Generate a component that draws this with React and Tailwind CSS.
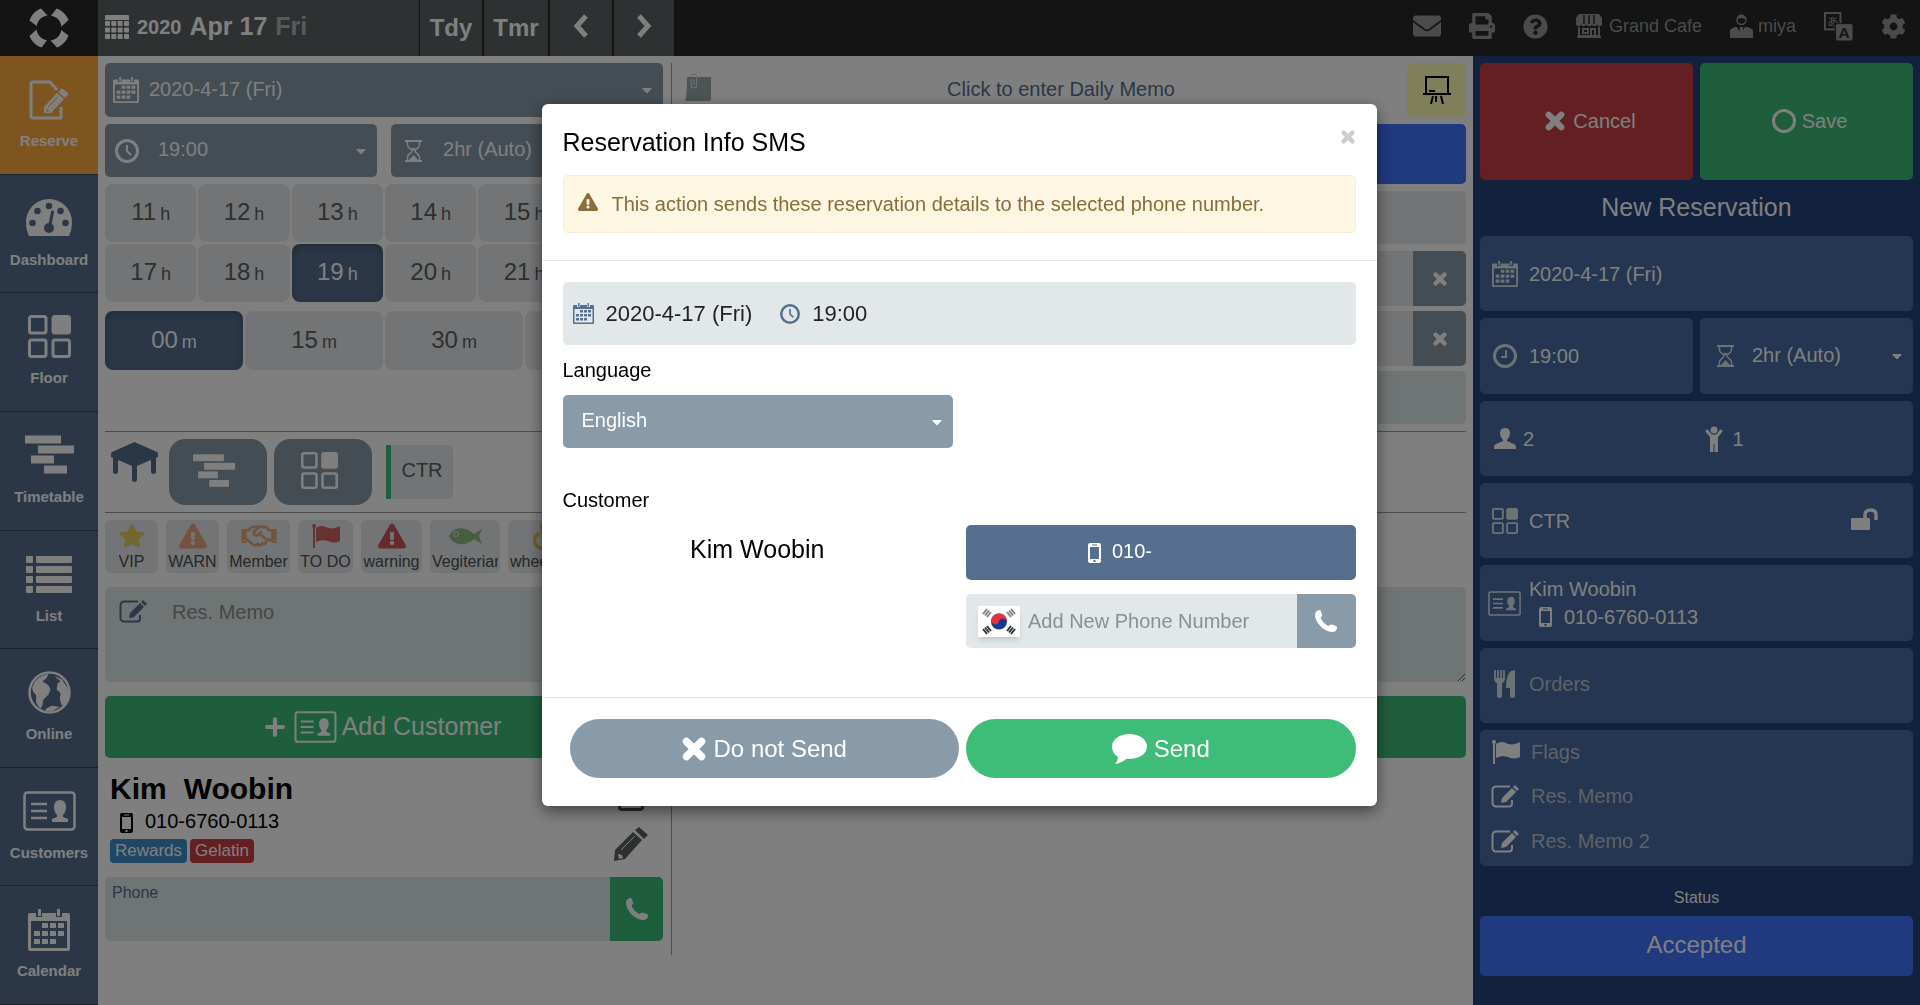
import React, { useState } from 'react';
import {
  FaCaretDown, FaCog, FaEnvelope, FaExclamationTriangle, FaPlus, FaPrint,
  FaQuestionCircle, FaRegHandshake, FaStar, FaWheelchair
} from 'react-icons/fa';

const HOURS = [11, 12, 13, 14, 15, 16, 17, 18, 19, 20, 21, 22];
const MINUTES = ['00', '15', '30', '45'];

/* ---------- icons ---------- */

const Logo = ({ className }) => (
  <svg viewBox="0 0 40 40" className={className} fill="currentColor">
    {[0, 90, 180, 270].map(a => (
      <path key={a} transform={`rotate(${a} 20 20)`} d="M12 0.500l6.500 7C12.500 8.500 8.500 12.500 7.800 18L0.500 12.500C2.500 7 6.500 2.500 12 0.500z" />
    ))}
  </svg>
);

const ReserveIcon = ({ className }) => (
  <svg viewBox="0 0 40 40" className={className} fill="none" stroke="currentColor" strokeWidth="3">
    <path d="M28 10l-7-8H4a2 2 0 0 0-2 2v32a2 2 0 0 0 2 2h28V27" strokeLinejoin="round" />
    <path d="M15 33v-6l13-14 7 6-13 14z" fill="currentColor" stroke="none" />
    <path d="M29 12l3-3q1-1 2 0l5 4q1 1 0 2l-3 3z" fill="currentColor" stroke="none" />
    <path d="M19 27l10-10" stroke="#ffaa3e" strokeWidth="1" />
    <path d="M17 28l3 3-2 1z" fill="#ffaa3e" stroke="none" />
  </svg>
);

const GaugeIcon = ({ className }) => (
  <svg viewBox="0 0 46 38" className={className}>
    <path d="M23 0a23 23 0 0 0-23 23c0 5 1 10 3 14h40c2-4 3-9 3-14A23 23 0 0 0 23 0z" fill="currentColor" />
    <g fill="#566f8f">
      <circle cx="6.500" cy="24" r="3.300" />
      <circle cx="11.500" cy="12" r="3.300" />
      <circle cx="23" cy="7" r="3.300" />
      <circle cx="34.500" cy="12" r="3.300" />
      <circle cx="39.500" cy="24" r="3.300" />
      <circle cx="23" cy="29" r="5" />
    </g>
    <path d="M23.500 28l3-15" stroke="#566f8f" strokeWidth="3" strokeLinecap="round" />
  </svg>
);

const FloorIcon = ({ className }) => (
  <svg viewBox="0 0 43 43" className={className} fill="none" stroke="currentColor" strokeWidth="3">
    <rect x="1.500" y="1.500" width="16.500" height="16.500" rx="2" />
    <rect x="25" y="1.500" width="16.500" height="16.500" rx="2" fill="currentColor" />
    <rect x="1.500" y="25" width="16.500" height="16.500" rx="2" />
    <rect x="25" y="25" width="16.500" height="16.500" rx="2" />
  </svg>
);

const TimetableIcon = ({ className }) => (
  <svg viewBox="0 0 49 39" className={className} fill="currentColor">
    <rect x="0" y="0" width="36" height="8" />
    <rect x="13" y="10" width="36" height="8" />
    <rect x="6" y="20" width="23" height="8" />
    <rect x="19" y="30" width="23" height="8" />
  </svg>
);

const ListIcon = ({ className }) => (
  <svg viewBox="0 0 46 37" className={className} fill="currentColor">
    {[0, 10, 20, 30].map(y => (
      <g key={y}>
        <rect x="0" y={y} width="7" height="7" rx="1" />
        <rect x="10" y={y} width="36" height="7" rx="1" />
      </g>
    ))}
  </svg>
);

const GlobeIcon = ({ className }) => (
  <svg viewBox="0 0 42 42" className={className}>
    <circle cx="21" cy="21" r="19.500" fill="none" stroke="currentColor" strokeWidth="2.500" />
    <path d="M5 14c2-5 7-10 15-11l-2 4-4 3 6 4 2 4-2 5-5 5-1 6-2 3-4-6v-7l-3-4-1-4z" fill="currentColor" />
    <path d="M26 5l7 3 6 9 1 7-3 8-4 2-2-7 1-5-4-4 1-6 3-2-4-3z" fill="currentColor" />
    <path d="M17 37l6-3 8 1-7 4h-6z" fill="currentColor" />
  </svg>
);

const CardIcon = ({ className }) => (
  <svg viewBox="0 0 53 40" className={className}>
    <rect x="1.500" y="1.500" width="50" height="37" rx="3" fill="none" stroke="currentColor" strokeWidth="2.500" />
    <path d="M8 13h16M8 20h16M8 27h16" stroke="currentColor" strokeWidth="2.500" />
    <path d="M37 9c4 0 6 3 6 7 0 3-1 6-3 8v2l5 2v3H29v-3l5-2v-2c-2-2-3-5-3-8 0-4 2-7 6-7z" fill="currentColor" />
  </svg>
);

const CalendarIcon = ({ className }) => (
  <svg viewBox="0 0 42 42" className={className} fill="currentColor">
    <path fillRule="evenodd" d="M2 4h6v4h6V4h14v4h6V4h6a2 2 0 0 1 2 2v34a2 2 0 0 1-2 2H2a2 2 0 0 1-2-2V6a2 2 0 0 1 2-2zM3 12v27h36V12z" />
    <path d="M10 0h3v7h-3zM29 0h3v7h-3zM14 14h6v5h-6zM22 14h6v5h-6zM30 14h6v5h-6zM6 22h6v5H6zM14 22h6v5h-6zM22 22h6v5h-6zM30 22h6v5h-6zM6 30h6v5H6zM14 30h6v5h-6zM22 30h6v5h-6z" />
  </svg>
);

const CalendarGrid = ({ className }) => (
  <svg viewBox="0 0 24 24" className={className} fill="currentColor">
    <path d="M1 0h22a1 1 0 0 1 1 1v4H0V1a1 1 0 0 1 1-1z" />
    {[6, 12.5, 19].map(y => [0, 6.3, 12.6, 19].map(x => (
      <rect key={`${x}-${y}`} x={x} y={y} width="5" height="5" rx="1" />
    )))}
  </svg>
);

const ClockIcon = ({ className }) => (
  <svg viewBox="0 0 24 24" className={className} fill="none" stroke="currentColor">
    <circle cx="12" cy="12" r="10.500" strokeWidth="3" />
    <path d="M12 6v6l4 4" strokeWidth="2" />
  </svg>
);

const ClockSquare = ({ className }) => (
  <svg viewBox="0 0 24 24" className={className} fill="none" stroke="currentColor">
    <circle cx="12" cy="12" r="10.500" strokeWidth="3" />
    <path d="M13 6v7H8" strokeWidth="2" />
  </svg>
);

const HourglassIcon = ({ className }) => (
  <svg viewBox="0 0 17 22" className={className} fill="none" stroke="currentColor">
    <path d="M0 1h17M0 21h17" strokeWidth="2" />
    <path d="M2.500 1v4c0 3 4.500 4 4.500 6s-4.500 3-4.500 6v4M14.500 1v4c0 3-4.500 4-4.500 6s4.500 3 4.500 6v4" strokeWidth="1.500" />
    <path d="M4 20l4.500-5 4.500 5zM6 8h5l-2.500 3z" fill="currentColor" stroke="none" />
  </svg>
);

const CrossIcon = ({ className }) => (
  <svg viewBox="0 0 24 24" className={className} stroke="currentColor" strokeWidth="7.500" strokeLinecap="round">
    <path d="M4.500 4.500l15 15M19.500 4.500l-15 15" />
  </svg>
);

const ChevronIcon = ({ className }) => (
  <svg viewBox="0 0 16 24" className={className} fill="none" stroke="currentColor" strokeWidth="5">
    <path d="M13 2L4 12l9 10" />
  </svg>
);

const PhoneIcon = ({ className }) => (
  <svg viewBox="0 0 22 22" className={className} fill="currentColor">
    <path d="M4 0q1-.3 1.700 1L7 4.500q.3 1.500-1.500 3C7 11.500 10 14.500 13.500 16q1.700-1.700 3-1.500l4.500 1.500q1.300.7 1 2c-.5 3-2.500 4-5 4C9 21.500 0 12.500 0 5 0 2.500 1.500.5 4 0z" />
  </svg>
);

const BubbleIcon = ({ className }) => (
  <svg viewBox="0 0 35 30" className={className} fill="currentColor">
    <path d="M17.500 0C27 0 35 5 35 12.500S27 25 17.500 25l-3-.2C11.500 27.500 7 29.500 3 30c1.500-2 2.800-4 3-7C2 20.500 0 17 0 12.500 0 5 8 0 17.500 0z" />
  </svg>
);

const StoreIcon = ({ className }) => (
  <svg viewBox="0 0 26 24" className={className}>
    <path fill="currentColor" d="M3 0h20l3 4v6c0 3-5 3-5 0 0 3-5 3-5 0 0 3-6 3-6 0 0 3-5 3-5 0 0 3-5 3-5 0V4z" />
    <path d="M8 1v9M13 1v9M18 1v9" stroke="#282828" strokeWidth="1.500" />
    <path d="M3 13v9h20v-9M7 15h5v4H7zM15 22v-7h4v7M1 23h24" fill="none" stroke="currentColor" strokeWidth="2" />
  </svg>
);

const StaffIcon = ({ className }) => (
  <svg viewBox="0 0 23 24" className={className}>
    <circle cx="11.500" cy="6" r="4.500" fill="none" stroke="currentColor" strokeWidth="1.500" />
    <path d="M7 5c0-6 9-6 9 0l-5-1z" fill="currentColor" />
    <path d="M0 24v-7c0-2 4-4 7-4l4 7 4-7c4 0 8 2 8 4v7z" fill="currentColor" />
    <path d="M10 13h3l1 8-2.500 2L9 21z" fill="currentColor" />
  </svg>
);

const TranslateIcon = ({ className }) => (
  <svg viewBox="0 0 30 30" className={className}>
    <rect x="1" y="1" width="16" height="17" fill="none" stroke="currentColor" strokeWidth="2" />
    <text x="3" y="14" fontSize="12" fill="currentColor" fontFamily="'Noto Sans CJK JP', sans-serif">あ</text>
    <rect x="12" y="12" width="18" height="18" rx="2" fill="currentColor" stroke="#282828" />
    <text x="15" y="27" fontSize="16" fontWeight="bold" fill="#282828" fontFamily="'Liberation Sans', sans-serif">A</text>
  </svg>
);

const ClipNote = ({ className }) => (
  <svg viewBox="0 0 26 28" className={className}>
    <path d="M2 4h24v20q0 4-1 4H0c2-5 2-15 2-24z" fill="#98a8a8" />
    <path d="M6 6v6c0 4 5.500 4 5.500 0V3c0-2.500-5-2.500-6 .5M8.700 6v6" fill="none" stroke="#d4dede" strokeWidth="1.200" />
  </svg>
);

const BoardIcon = ({ className }) => (
  <svg viewBox="0 0 28 28" className={className} fill="none" stroke="currentColor">
    <path d="M3 18V1h22v17M0 18h28" strokeWidth="2" />
    <path d="M10 20l-2 8M18 20l2 8M13 20v6" strokeWidth="2" />
    <path d="M6 15h6" strokeWidth="2" />
  </svg>
);

const TableIcon = ({ className }) => (
  <svg viewBox="0 0 47 40" className={className} fill="currentColor">
    <path d="M23.500 0L46 10q1 1 1 2v3L23.500 25 0 15v-3q0-1 1-2z" />
    <path d="M4.500 14v15.500M42.500 14v15.500M23.500 22v15.500" stroke="currentColor" strokeWidth="5" strokeLinecap="round" />
  </svg>
);

const FlagIcon = ({ className }) => (
  <svg viewBox="0 0 28 24" className={className} fill="currentColor">
    <circle cx="2" cy="2" r="2" />
    <path d="M1 2h2v22H1zM4 4c5-3 8-2 12 0 4 1 8 0 12-2v15c-4 2-8 2-12 0-4-1-8-1-12 1z" />
  </svg>
);

const FishIcon = ({ className }) => (
  <svg viewBox="0 0 33 17" className={className}>
    <path d="M0 8c5-11 18-9 25-2l8-5-3 7 3 8-8-5C18 18 5 19 0 8z" fill="currentColor" />
    <circle cx="7" cy="6" r="2.500" fill="none" stroke="#e5e8eb" />
  </svg>
);

const NoteEdit = ({ className }) => (
  <svg viewBox="0 0 28 23" className={className}>
    <path d="M19 1.500H5A3.500 3.500 0 0 0 1.500 5v13A3.500 3.500 0 0 0 5 21.500h13a3 3 0 0 0 3-3V15" fill="none" stroke="currentColor" strokeWidth="2" />
    <path d="M10 18l1-5 10-10 4 4-10 10zM22 2l2-2 4 4-2 2z" fill="currentColor" />
  </svg>
);

const PencilIcon = ({ className }) => (
  <svg viewBox="0 0 34 34" className={className}>
    <path d="M0 34l1-11L19 5l9 8-17 19zM21 3l4-3 9 8-4 4z" fill="currentColor" />
    <path d="M7 23L21 9" stroke="#fff" strokeWidth="1" />
    <path d="M4 27l4 1 1 3-4 1z" fill="#fff" />
  </svg>
);

const MobileIcon = ({ className }) => (
  <svg viewBox="0 0 13 20" className={className} fill="currentColor">
    <path fillRule="evenodd" d="M2 0h9q2 0 2 2v16q0 2-2 2H2q-2 0-2-2V2q0-2 2-2zM2 4v12h9V4zM5.500 17v2h2v-2zM4 1.500v1h5v-1z" />
  </svg>
);

const PersonIcon = ({ className }) => (
  <svg viewBox="0 0 22 21" className={className} fill="currentColor">
    <path d="M11 0c4 0 5 3 5 5s-1 5-3 7v1l7 3q2 1 2 3v2H0v-2q0-2 2-3l7-3v-1C7 10 6 7 6 5s1-5 5-5z" />
  </svg>
);

const ChildIcon = ({ className }) => (
  <svg viewBox="0 0 18 26" className={className}>
    <circle cx="9" cy="4" r="3.500" fill="currentColor" />
    <path d="M2 5l4 5h6l4-5" fill="none" stroke="currentColor" strokeWidth="3" strokeLinecap="round" />
    <path d="M5 9h8v17H9.500v-8h-1v8H5z" fill="currentColor" />
  </svg>
);

const UnlockIcon = ({ className }) => (
  <svg viewBox="0 0 27 22" className={className}>
    <rect x="0" y="10" width="19" height="12" rx="1" fill="currentColor" />
    <path d="M14 10V7q0-5 6-5 5 0 5 5v5" fill="none" stroke="currentColor" strokeWidth="3.500" />
  </svg>
);

const CutleryIcon = ({ className }) => (
  <svg viewBox="0 0 21 28" className={className}>
    <path d="M1 0v9q0 3 4.500 4Q10 12 10 9V0M4 0v9M7 0v9" fill="none" stroke="currentColor" strokeWidth="1.800" />
    <path d="M1 8h9v3q-1 2-2 2v13q0 2-2.500 2T3 26V13q-1 0-2-2zM21 0v26q0 2-2.500 2T16 26v-8h-4q0-13 5-17z" fill="currentColor" />
  </svg>
);

const KoreaFlag = ({ className }) => (
  <svg viewBox="0 0 42 31" className={className}>
    <rect width="42" height="31" fill="#fff" />
    <circle cx="21" cy="15.500" r="8" fill="#123a94" />
    <path d="M14 11.500a8 8 0 0 1 14 8a4 4 0 0 0-7-4a4 4 0 0 1-7-4z" fill="#e0323c" transform="rotate(-12 21 15.500)" />
    <g stroke="#333" strokeWidth="2">
      <path d="M5 8l4-5M7 9.500l4-5M9 11l4-5M37 8l-4-5M35 9.500l-4-5M33 11l-4-5" opacity=".6" />
      <path d="M5 23l4 5M7 21.500l4 5M9 20l4 5M37 23l-4 5M35 21.500l-4 5M33 20l-4 5" />
    </g>
  </svg>
);

/* ---------- data ---------- */

const NAV = [
  { label: 'Reserve', icon: ReserveIcon, size: 'h-10 w-10', active: true },
  { label: 'Dashboard', icon: GaugeIcon, size: 'h-[38px] w-[46px]' },
  { label: 'Floor', icon: FloorIcon, size: 'h-[43px] w-[43px]' },
  { label: 'Timetable', icon: TimetableIcon, size: 'h-10 w-[49px]' },
  { label: 'List', icon: ListIcon, size: 'h-[37px] w-[46px]' },
  { label: 'Online', icon: GlobeIcon, size: 'h-[43px] w-[43px]' },
  { label: 'Customers', icon: CardIcon, size: 'h-10 w-[53px]' },
  { label: 'Calendar', icon: CalendarIcon, size: 'h-[42px] w-[42px]' }
];

const FLAGS = [
  { label: 'VIP', icon: FaStar, color: 'text-[#e8cc60]', width: 'w-[53px]', size: 'h-[26px] w-[26px]' },
  { label: 'WARN', icon: FaExclamationTriangle, color: 'text-[#e6a47c]', width: 'w-[53px]', size: 'h-7 w-7' },
  { label: 'Member', icon: FaRegHandshake, color: 'text-[#e6a47c]', width: 'w-[63px]', size: 'h-7 w-9' },
  { label: 'TO DO', icon: FlagIcon, color: 'text-[#cf6468]', width: 'w-[55px]', size: 'h-6 w-7' },
  { label: 'warning', icon: FaExclamationTriangle, color: 'text-[#cf5458]', width: 'w-[61px]', size: 'h-7 w-7' },
  { label: 'Vegiterian', icon: FishIcon, color: 'text-[#8fbc80]', width: 'w-[70px]', size: 'h-[17px] w-[33px]' },
  { label: 'wheelchair', icon: FaWheelchair, color: 'text-[#e8b840]', width: 'w-[77px]', size: 'h-7 w-7' }
];

/* ---------- pieces ---------- */

const SelectBox = ({ id, label, icon, value, className, inner }) => (
  <div className={`relative flex items-center rounded-[5px] text-white ${className}`}>
    {icon}
    <select id={id} aria-label={label} defaultValue={value} className={`w-full appearance-none bg-transparent pb-[3px] text-xl leading-6 outline-none ${inner}`}>
      <option>{value}</option>
    </select>
    <FaCaretDown className="pointer-events-none absolute right-2 h-4 w-4" />
  </div>
);

const Pick = ({ value, unit, active, onClick, className }) => (
  <button
    type="button"
    onClick={onClick}
    className={`rounded-lg pb-0.5 text-2xl ${className} ${
      active ? 'bg-[#566f8f] text-white shadow-[inset_0_3px_8px_rgba(0,0,0,0.2)]' : 'bg-[#e5e8eb] text-[#5a6060]'
    }`}
  >
    {value}
    <span className="ml-1 text-lg leading-6">{unit}</span>
  </button>
);

const TopBar = () => (
  <header className="flex h-14 shrink-0 bg-[#282828] font-bold text-white">
    <div className="flex w-[98px] items-center justify-center">
      <Logo className="h-10 w-10" />
    </div>
    <div className="flex bg-[#5b6363]">
      <button type="button" className="flex w-[321px] items-center pb-0.5 pl-[7px]">
        <CalendarGrid className="h-6 w-6" />
        <span className="ml-2 text-xl">2020</span>
        <span className="ml-2 text-[25px]">Apr 17</span>
        <span className="ml-2 text-[25px] text-[#b4b4b4]">Fri</span>
      </button>
      <button type="button" className="w-[63px] border-l border-[#282828] text-2xl">Tdy</button>
      <button type="button" className="w-[66px] border-l-2 border-[#282828] text-2xl">Tmr</button>
      <button type="button" aria-label="Previous day" className="flex w-16 items-center justify-center border-l-2 border-[#282828] pb-1">
        <ChevronIcon className="h-6 w-4" />
      </button>
      <button type="button" aria-label="Next day" className="flex w-[62px] items-center justify-center border-l-2 border-[#282828] pb-1">
        <ChevronIcon className="h-6 w-4 rotate-180" />
      </button>
    </div>
    <nav className="ml-auto flex items-center gap-7 pr-3.5 pb-1 text-lg font-normal text-[#969696]">
      <button type="button" aria-label="Mail"><FaEnvelope className="h-7 w-7" /></button>
      <button type="button" aria-label="Print"><FaPrint className="h-[26px] w-[26px]" /></button>
      <button type="button" aria-label="Help"><FaQuestionCircle className="h-[25px] w-[25px]" /></button>
      <a href="#shop" className="flex items-center gap-[7px]">
        <StoreIcon className="h-6 w-[26px]" />
        Grand Cafe
      </a>
      <a href="#account" className="flex items-center gap-[5px]">
        <StaffIcon className="h-6 w-[23px]" />
        miya
      </a>
      <button type="button" aria-label="Language"><TranslateIcon className="h-[29px] w-[29px]" /></button>
      <button type="button" aria-label="Settings"><FaCog className="h-[25px] w-[25px]" /></button>
    </nav>
  </header>
);

const SideNav = () => (
  <nav className="flex w-[98px] shrink-0 flex-col text-white">
    {NAV.map(({ label, icon: Icon, size, active }) => (
      <a
        key={label}
        href={`#${label.toLowerCase()}`}
        className={`flex flex-1 flex-col items-center border-b border-[#35455a] pt-[22px] text-[15px] font-bold ${active ? 'bg-[#ffaa3e]' : 'bg-[#566f8f]'}`}
      >
        <span className="flex h-[43px] items-center"><Icon className={size} /></span>
        <span className="mt-2 leading-6">{label}</span>
      </a>
    ))}
  </nav>
);

const SummaryCard = ({ icon, children, className = '' }) => (
  <div className={`flex items-center rounded-[5px] bg-[#486ca2] text-xl ${className}`}>
    <span className="flex w-[49px] shrink-0 justify-center text-[#d6e6ea]">{icon}</span>
    {children}
  </div>
);

const SummaryPanel = () => (
  <aside className="w-[447px] shrink-0 bg-[#22427c] px-[7px] pt-[7px] text-white">
    <div className="grid grid-cols-2 gap-[7px] text-xl">
      <button type="button" className="flex h-[117px] items-center justify-center gap-2 rounded-[5px] bg-[#c83e44] pb-0.5 pl-2">
        <CrossIcon className="h-5 w-5" />
        Cancel
      </button>
      <button type="button" className="flex h-[117px] items-center justify-center gap-1.5 rounded-[5px] bg-[#3dbd78] pb-0.5 pl-1.5">
        <span className="h-6 w-6 rounded-full border-[3px] border-white" />
        Save
      </button>
    </div>
    <h2 className="flex h-14 items-center justify-center text-[25px]">New Reservation</h2>
    <div className="flex flex-col gap-[7px]">
      <SummaryCard className="h-[75px]" icon={<CalendarIcon className="h-[26px] w-[26px]" />}>2020-4-17 (Fri)</SummaryCard>
      <div className="grid grid-cols-2 gap-[7px]">
        <SummaryCard className="h-[76px]" icon={<ClockSquare className="h-6 w-6" />}>19:00</SummaryCard>
        <SelectBox
          id="stay"
          label="Duration"
          value="2hr (Auto)"
          icon={<HourglassIcon className="ml-[17px] h-[22px] w-[17px] shrink-0 text-[#d6e6ea]" />}
          inner="pl-[18px]"
          className="h-[76px] bg-[#486ca2]"
        />
      </div>
      <div className="grid h-[75px] grid-cols-2 items-center rounded-[5px] bg-[#486ca2] text-xl">
        <span className="flex items-center gap-[7px] pl-3.5"><PersonIcon className="h-[21px] w-[22px]" />2</span>
        <span className="flex items-center gap-2.5 pl-2"><ChildIcon className="h-[26px] w-[18px]" />1</span>
      </div>
      <SummaryCard className="h-[75px]" icon={<FloorIcon className="h-[26px] w-[26px]" />}>
        CTR
        <button type="button" aria-label="Lock table" className="mr-[35px] ml-auto pb-1"><UnlockIcon className="h-[22px] w-[27px]" /></button>
      </SummaryCard>
      <SummaryCard className="h-[76px]" icon={<CardIcon className="h-[25px] w-[33px]" />}>
        <div className="leading-7">
          <p>Kim Woobin</p>
          <p className="flex items-center gap-3 pl-2.5"><MobileIcon className="h-5 w-[13px]" />010-6760-0113</p>
        </div>
      </SummaryCard>
      <SummaryCard className="h-[75px] pb-1" icon={<CutleryIcon className="h-7 w-[21px]" />}>
        <span className="text-[#bcc5ce]">Orders</span>
      </SummaryCard>
      <ul className="h-[136px] rounded-[5px] bg-[#486ca2] text-xl leading-[45px] text-[#bcc5ce]">
        <li className="flex h-11 items-center gap-[11px] pl-3"><FlagIcon className="h-6 w-7 text-white" />Flags</li>
        <li className="flex items-center gap-3 pl-[11px]"><NoteEdit className="h-[23px] w-7 text-white" />Res. Memo</li>
        <li className="flex items-center gap-3 pl-[11px]"><NoteEdit className="h-[23px] w-7 text-white" />Res. Memo 2</li>
      </ul>
    </div>
    <h3 className="mt-5 text-center text-base">Status</h3>
    <button type="button" className="mt-1.5 h-[60px] w-full rounded-[5px] bg-[#4072fe] pb-0.5 text-2xl">Accepted</button>
  </aside>
);

const RowClear = ({ label }) => (
  <div className="flex h-[55px] justify-end rounded-[5px] bg-[#e5e8eb]">
    <button type="button" aria-label={label} className="flex w-[53px] items-center justify-center rounded-r-[5px] bg-[#899ba9] text-white">
      <CrossIcon className="h-3.5 w-3.5" />
    </button>
  </div>
);

const BookingForm = () => {
  const [hour, setHour] = useState(19);
  const [minute, setMinute] = useState('00');

  return (
    <main className="min-w-0 flex-1 bg-white px-[7px] pt-[7px]">
      <div className="flex">
        <div className="w-5/12 border-r border-[#999] pr-2">
          <SelectBox
            id="date"
            label="Date"
            value="2020-4-17 (Fri)"
            icon={<CalendarIcon className="ml-2 h-[26px] w-[26px] shrink-0" />}
            inner="pl-2.5"
            className="h-[54px] bg-[#899ba9]"
          />
          <div className="mt-[7px] grid grid-cols-2 gap-3.5">
            <SelectBox
              id="time"
              label="Time"
              value="19:00"
              icon={<ClockIcon className="ml-2.5 h-6 w-6 shrink-0" />}
              inner="pl-[19px]"
              className="h-[53px] bg-[#899ba9]"
            />
            <SelectBox
              id="duration"
              label="Duration"
              value="2hr (Auto)"
              icon={<HourglassIcon className="ml-3.5 h-[22px] w-[17px] shrink-0" />}
              inner="pl-[21px]"
              className="h-[53px] bg-[#899ba9]"
            />
          </div>
          <div className="mt-[7px] grid grid-cols-6 gap-0.5">
            {HOURS.map(h => (
              <Pick key={h} value={h} unit="h" active={h === hour} onClick={() => setHour(h)} className="h-[58px]" />
            ))}
          </div>
          <div className="mt-[9px] grid grid-cols-4 gap-0.5">
            {MINUTES.map(m => (
              <Pick key={m} value={m} unit="m" active={m === minute} onClick={() => setMinute(m)} className="h-[59px]" />
            ))}
          </div>
        </div>
        <div className="flex-1 pl-3">
          <div className="flex h-[54px] items-center">
            <ClipNote className="mb-1.5 ml-px h-7 w-[26px]" />
            <button type="button" className="flex-1 pb-0.5 pl-1 text-xl text-[#566f8f]">Click to enter Daily Memo</button>
            <button type="button" aria-label="Notice board" className="flex h-[54px] w-[59px] items-center justify-center rounded-[5px] bg-[#ffffb8] text-black">
              <BoardIcon className="h-7 w-7" />
            </button>
          </div>
          <div className="mt-[7px] h-[60px] rounded-[5px] bg-[#4072fe]" />
          <div className="mt-[7px] h-[53px] rounded-[5px] bg-[#e5e8eb]" />
          <div className="mt-[7px] flex flex-col gap-[5px]">
            <RowClear label="Clear adults" />
            <RowClear label="Clear children" />
            <div className="h-[53px] rounded-[5px] bg-[#dfe8e9]" />
          </div>
        </div>
      </div>

      <div className="mt-[7px] flex h-[82px] items-center border-y border-[#999]">
        <TableIcon className="mb-5 ml-1.5 h-10 w-[47px] text-[#566f8f]" />
        <button type="button" aria-label="Timetable" className="ml-[11px] flex h-[66px] w-[98px] items-center justify-center rounded-2xl bg-[#899ba9] pr-2 pb-0.5 text-white">
          <TimetableIcon className="h-[34px] w-[42px]" />
        </button>
        <button type="button" aria-label="Floor" className="ml-[7px] flex h-[66px] w-[98px] items-center justify-center rounded-2xl bg-[#899ba9] pr-2 pb-1 text-white">
          <FloorIcon className="h-[37px] w-[37px]" />
        </button>
        <button type="button" className="ml-3.5 h-[54px] w-[67px] rounded-r-[5px] border-l-[5px] border-[#3dbd78] bg-[#e5e8eb] pb-1 text-xl text-[#5a6060]">CTR</button>
      </div>

      <div className="mt-[7px] flex gap-2">
        {FLAGS.map(({ label, icon: Icon, color, width, size }) => (
          <button key={label} type="button" className={`flex h-[53px] flex-col items-center overflow-hidden rounded-md bg-[#e5e8eb] px-0.5 ${width}`}>
            <span className={`flex h-8 items-center ${color}`}><Icon className={size} /></span>
            <span className="max-w-full overflow-hidden text-base leading-5 text-[#4a5050]">{label}</span>
          </button>
        ))}
      </div>

      <div className="mt-3.5 flex h-[95px] rounded-[5px] bg-[#dfe8e9]">
        <NoteEdit className="mt-[13px] ml-3.5 h-[23px] w-7 shrink-0 text-[#566f8f]" />
        <textarea aria-label="Res. Memo" placeholder="Res. Memo" className="flex-1 bg-transparent pt-3 pl-[25px] text-xl leading-[26px] outline-none placeholder:text-[#8c8f8f]" />
      </div>

      <div className="mt-3.5 flex rounded-[5px] bg-[#3dbd78] text-white">
        <button type="button" className="flex h-[62px] w-5/12 items-center justify-center pr-3 text-[25px]">
          <FaPlus className="h-[22px] w-[22px]" />
          <CardIcon className="mr-[5px] ml-2 h-8 w-[43px]" />
          Add Customer
        </button>
      </div>

      <div className="h-[197px] w-5/12 border-r border-[#999] pr-2">
        <div className="flex h-[119px] justify-between">
          <div className="pt-[13px] pl-[5px]">
            <h2 className="flex gap-[17px] text-[30px] leading-9 font-bold text-black">
              <span>Kim</span>
              <span>Woobin</span>
            </h2>
            <p className="flex h-7 items-center gap-3 pl-2.5 text-xl text-black">
              <MobileIcon className="mt-1 h-5 w-[13px]" />
              010-6760-0113
            </p>
            <div className="mt-1 flex gap-[3px] text-[17px] leading-6 text-white">
              <span className="rounded-[4px] bg-[#3c8fcc] px-[5px]">Rewards</span>
              <span className="rounded-[4px] bg-[#c83e44] px-[5px]">Gelatin</span>
            </div>
          </div>
          <div className="mr-[15px] flex flex-col items-center gap-4 pt-[27px]">
            <span className="h-[26px] w-[26px] rounded-[4px] border-[3px] border-[#484e50]" />
            <button type="button" aria-label="Edit customer" className="text-[#5a6060]"><PencilIcon className="h-[34px] w-[34px]" /></button>
          </div>
        </div>
        <div className="flex h-16 rounded-[5px] bg-[#dfe8e9]">
          <label htmlFor="phone" className="pt-1.5 pl-[7px] text-base leading-5 text-[#566f8f]">Phone</label>
          <input id="phone" type="tel" className="min-w-0 flex-1 bg-transparent px-2 outline-none" />
          <button type="button" aria-label="Call" className="flex w-[53px] items-center justify-center rounded-r-[5px] bg-[#3dbd78] text-white">
            <PhoneIcon className="h-[22px] w-[22px]" />
          </button>
        </div>
      </div>
    </main>
  );
};

const SmsDialog = () => (
  <div className="fixed inset-0 flex items-start justify-center bg-black/50 pt-[104px] pr-0.5">
    <div role="dialog" aria-labelledby="sms-title" className="w-[835px] rounded-md bg-white text-black shadow-[0_5px_15px_rgba(0,0,0,0.5)]">
      <div className="border-b border-[#e5e5e5] px-[21px] pt-5 pb-[27px]">
        <div className="flex h-[51px] items-start justify-between">
          <h1 id="sms-title" className="text-[25px] leading-9">Reservation Info SMS</h1>
          <button type="button" aria-label="Close" className="mt-1.5 mr-px text-[#ccc]"><CrossIcon className="h-3.5 w-3.5" /></button>
        </div>
        <p className="flex h-[58px] items-center gap-3.5 rounded-[5px] border border-[#faebcc] bg-[#fcf6e2] pl-3.5 text-xl text-[#8a6d3b]">
          <FaExclamationTriangle className="mb-1 h-5 w-5" />
          This action sends these reservation details to the selected phone number.
        </p>
      </div>

      <div className="border-b border-[#e5e5e5] px-[21px] pt-[21px] pb-[49px]">
        <div className="flex h-[63px] items-center rounded-[5px] bg-[#e2e8ea] pl-2.5 text-[22px] text-[#222]">
          <CalendarIcon className="h-[21px] w-[21px] text-[#566f8f]" />
          <span className="ml-3">2020-4-17 (Fri)</span>
          <ClockIcon className="ml-7 h-5 w-5 text-[#566f8f]" />
          <span className="ml-3">19:00</span>
        </div>
        <p className="flex h-[50px] items-center text-xl">Language</p>
        <SelectBox id="language" label="Language" value="English" inner="pl-[19px]" className="h-[53px] w-[390px] bg-[#899ba9]" />
        <h4 className="mt-[39px] text-xl leading-[26px]">Customer</h4>
        <div className="mt-3 grid grid-cols-2 gap-3.5">
          <p className="h-[55px] text-center text-[25px] leading-[48px]">Kim Woobin</p>
          <div className="flex flex-col gap-3.5">
            <button type="button" className="flex h-[55px] items-center gap-[11px] rounded-[5px] bg-[#566f8f] pb-1 pl-[122px] text-xl text-white">
              <MobileIcon className="mt-1 h-5 w-[13px]" />
              010-
            </button>
            <div className="flex h-[54px] rounded-[5px] bg-[#e2e8ea]">
              <span className="flex w-[55px] items-center pl-3"><KoreaFlag className="h-[31px] w-[42px] shadow-md" /></span>
              <input type="tel" aria-label="New phone number" placeholder="Add New Phone Number" className="min-w-0 flex-1 bg-transparent pl-[7px] text-xl outline-none placeholder:text-[#8c8f8f]" />
              <button type="button" aria-label="Use number" className="flex w-[59px] items-center justify-center rounded-r-[5px] bg-[#899ba9] text-white">
                <PhoneIcon className="h-[22px] w-[22px]" />
              </button>
            </div>
          </div>
        </div>
      </div>

      <div className="flex gap-[7px] pt-[21px] pr-[21px] pb-7 pl-7 text-2xl text-white">
        <button type="button" className="flex h-[59px] flex-1 items-center justify-center gap-2 rounded-full bg-[#899ba9]">
          <CrossIcon className="h-6 w-6" />
          Do not Send
        </button>
        <button type="button" className="flex h-[59px] flex-1 items-center justify-center gap-[7px] rounded-full bg-[#3dbd78]">
          <BubbleIcon className="h-[30px] w-[35px]" />
          Send
        </button>
      </div>
    </div>
  </div>
);

const App = () => (
  <div className="flex h-screen flex-col overflow-hidden font-['Liberation_Sans',Arial,sans-serif]">
    <TopBar />
    <div className="flex min-h-0 flex-1">
      <SideNav />
      <BookingForm />
      <SummaryPanel />
    </div>
    <SmsDialog />
  </div>
);

export default App;
